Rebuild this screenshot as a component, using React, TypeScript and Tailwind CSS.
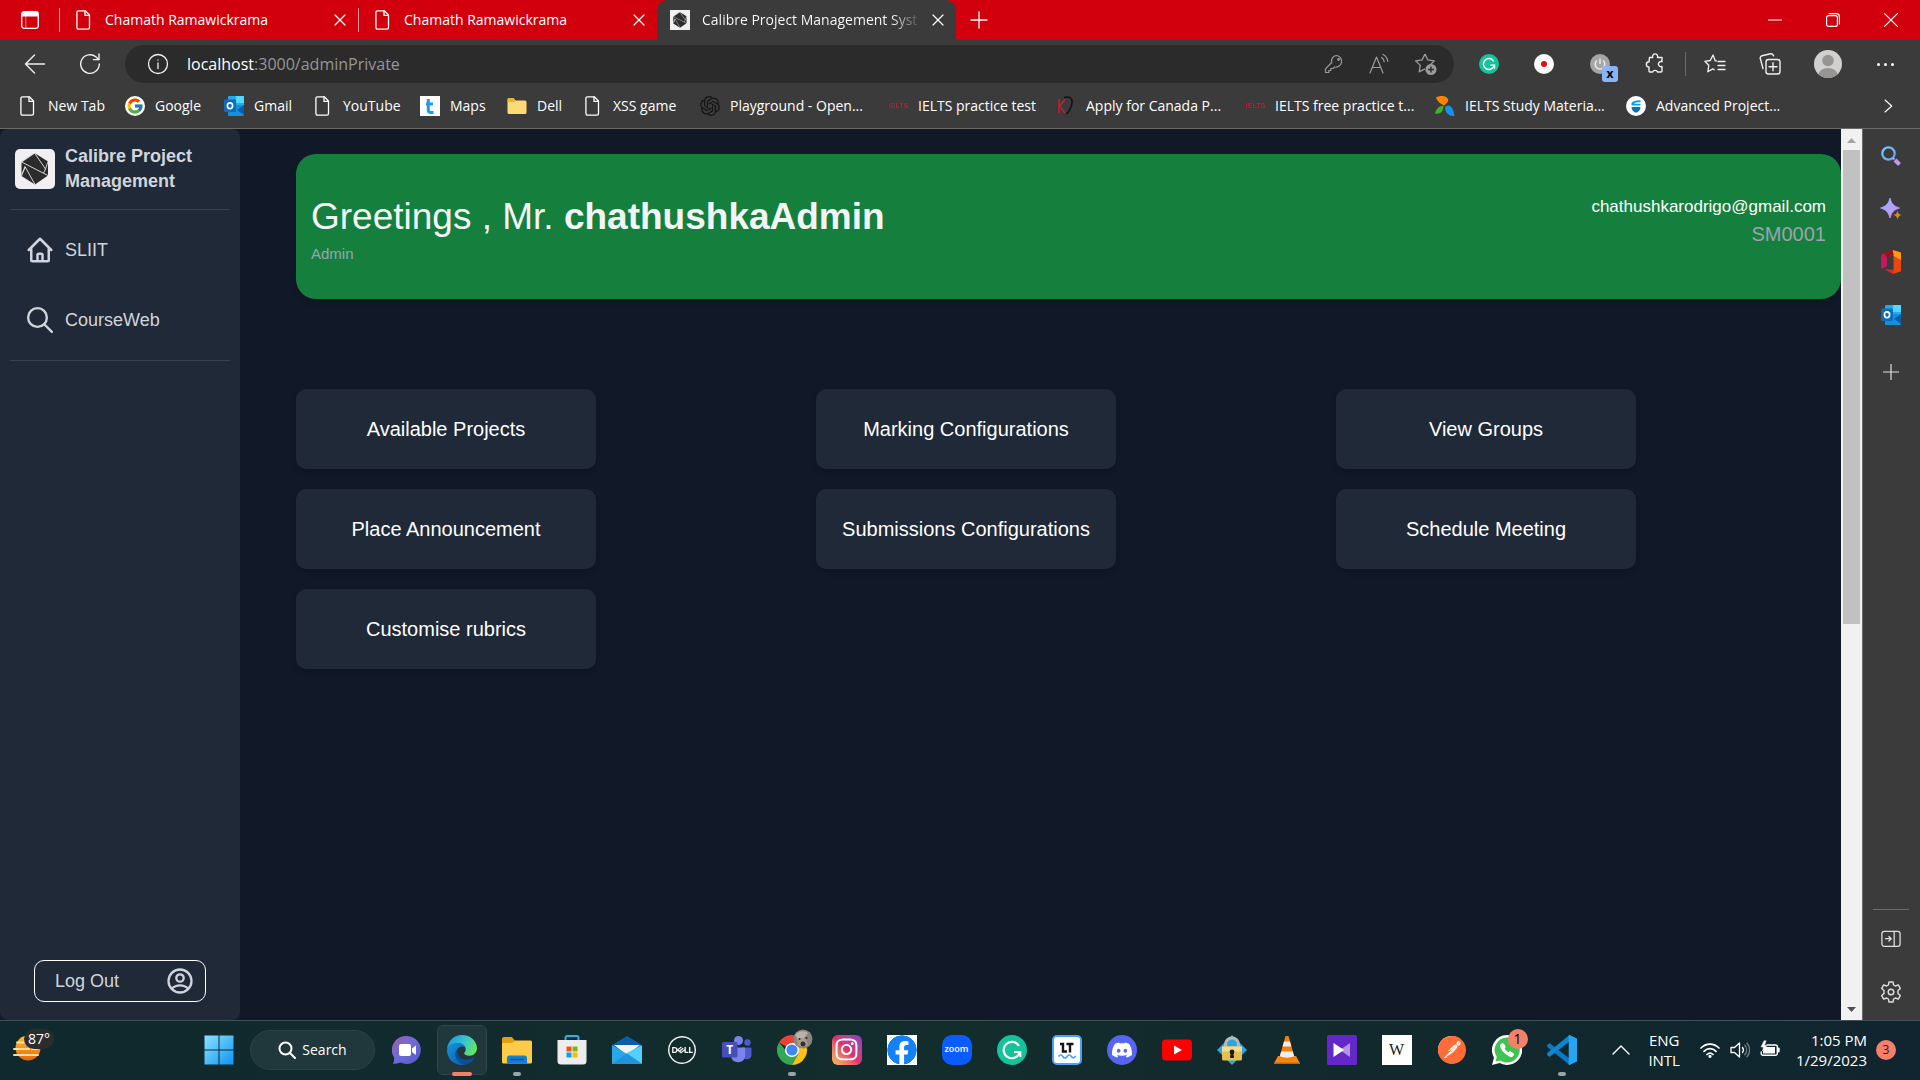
import React from "react";
import { FcGoogle } from "react-icons/fc";
import { SiDell, SiDiscord, SiPostman, SiOpenai } from "react-icons/si";
import { FaFacebookF, FaInstagram } from "react-icons/fa";
import { IoCall } from "react-icons/io5";

/* ---------- shared line icons ---------- */

type IconProps = { className?: string };

const Line = ({ className, box = 20, w = 1, children }: { className?: string; box?: number; w?: number; children: React.ReactNode }) => (
  <svg viewBox={`0 0 ${box} ${box}`} className={className} fill="none" stroke="currentColor" strokeWidth={w} strokeLinecap="round" strokeLinejoin="round" aria-hidden="true">
    {children}
  </svg>
);

const PageIcon = ({ className = "size-5" }: IconProps) => (
  <Line className={className} w={1.3}>
    <path d="M4.500 .8h6.800l4.200 4.200v12.600a1.600 1.600 0 0 1-1.600 1.600H4.500a1.600 1.600 0 0 1-1.600-1.600V2.400A1.600 1.600 0 0 1 4.500.8z" />
    <path d="M11 1v4.400h4.400" />
  </Line>
);

const CloseIcon = ({ className = "size-3" }: IconProps) => (
  <Line className={className} box={12} w={1.2}>
    <path d="M1 1l10 10M11 1L1 11" />
  </Line>
);

const CalibreLogo = ({ className }: IconProps) => (
  <svg viewBox="0 0 40 40" className={className} aria-hidden="true">
    <rect width="40" height="40" fill="#f1eff1" />
    <path d="M19.500 4L33 12.500V26.500L20 35.500L6.500 27V13z" fill="#2b2b2b" />
    <path d="M6.500 13L33 26.500M19.500 4L30.500 20L33 12.500M30.500 20L28.500 24M20 35.500L10 17.500L6.500 27M6.500 13L20 4M10.500 18L7 25" stroke="#e8e6e8" strokeWidth="0.900" fill="none" />
  </svg>
);

const OutlookIcon = ({ className = "size-5" }: IconProps) => (
  <svg viewBox="0 0 20 20" className={className} aria-hidden="true">
    <rect x="4" y="0" width="16" height="12" rx="1" fill="#28a8ea" />
    <path d="M12 0h7a1 1 0 0 1 1 1v6h-8z" fill="#50d9ff" />
    <path d="M4 9h16v10a1 1 0 0 1-1 1H5a1 1 0 0 1-1-1z" fill="#1490df" />
    <path d="M20 9v10l-7-5z" fill="#0a5ea8" />
    <rect x="0" y="3.500" width="12" height="12.500" rx="1.200" fill="#0f6cbd" />
    <ellipse cx="6" cy="9.800" rx="2.600" ry="2.900" fill="none" stroke="#fff" strokeWidth="1.600" />
  </svg>
);

const GrammarlyIcon = ({ className }: IconProps) => (
  <svg viewBox="0 0 30 30" className={className} fill="none" aria-hidden="true">
    <circle cx="15" cy="15" r="15" fill="#15c39a" />
    <path d="M22 11a8.200 8.200 0 1 0 .8 6H17" stroke="#fff" strokeWidth="2.200" />
    <path d="M23.300 16v6" stroke="#fff" strokeWidth="2" />
  </svg>
);

/* ---------- browser tab strip ---------- */

function BackgroundTab({ title }: { title: string }) {
  return (
    <div className="flex h-6 w-[299px] items-center border-l border-[#ff9a9a] pr-2.5 pl-3.5">
      <PageIcon />
      <button className="ml-[11px] flex-1 text-left text-sm leading-6">{title}</button>
      <button aria-label={`Close ${title}`} className="p-0.5">
        <CloseIcon />
      </button>
    </div>
  );
}

function TabStrip() {
  return (
    <header className="flex h-10 shrink-0 items-center bg-[#d1000c] text-white">
      <button aria-label="Tab actions menu" className="flex w-[59px] justify-center">
        <svg viewBox="0 0 20 20" className="size-5" fill="none" aria-hidden="true">
          <rect x="1.700" y="1.700" width="16.600" height="16.600" rx="2.500" stroke="#fff" strokeWidth="1.300" />
          <path d="M1.700 6.500V4a2.500 2.500 0 0 1 2.500-2.500h11.600A2.500 2.500 0 0 1 18.300 4v2.500z" fill="#fff" />
          <path d="M5.800 6v12" stroke="#fff" strokeOpacity=".5" />
        </svg>
      </button>
      <BackgroundTab title="Chamath Ramawickrama" />
      <BackgroundTab title="Chamath Ramawickrama" />
      <div className="flex h-10 w-[299px] items-center rounded-t-[10px] bg-[#3b3b3b] pr-2 pl-[13px]">
        <CalibreLogo className="size-5" />
        <button className="ml-3 bg-linear-to-r from-white from-88% to-[#5a5a5a] bg-clip-text text-left text-sm whitespace-nowrap text-transparent">
          Calibre Project Management Syst
        </button>
        <button aria-label="Close Calibre Project Management System" className="ml-auto p-1">
          <CloseIcon />
        </button>
      </div>
      <button aria-label="New tab" className="ml-3.5">
        <Line className="size-[18px]" box={18} w={1.3}>
          <path d="M9 1v16M1 9h16" />
        </Line>
      </button>
      <div className="ml-auto flex h-full">
        <button aria-label="Minimize" className="flex w-[58px] items-center justify-center">
          <Line className="size-3.5" box={14} w={1.2}>
            <path d="M.5 7h13" />
          </Line>
        </button>
        <button aria-label="Restore" className="flex w-[58px] items-center justify-center">
          <Line className="size-3.5" box={14} w={1.2}>
            <rect x=".6" y="2.600" width="10.800" height="10.800" rx="2" />
            <path d="M3 .6h7.500a2.900 2.900 0 0 1 2.900 2.900V11" />
          </Line>
        </button>
        <button aria-label="Close window" className="flex w-[58px] items-center justify-center">
          <Line className="size-3.5" box={14} w={1.2}>
            <path d="M.6.6l12.800 12.800M13.400.6L.6 13.400" />
          </Line>
        </button>
      </div>
    </header>
  );
}

/* ---------- address bar ---------- */

function Toolbar() {
  return (
    <div className="flex h-12 shrink-0 items-center bg-[#3b3b3b] text-[#f0f0f0]">
      <button aria-label="Back" className="ml-6">
        <Line className="size-[22px]" box={22} w={1.4}>
          <path d="M20.500 11H1.500M10.500 2L1.500 11l9 9" />
        </Line>
      </button>
      <button aria-label="Refresh" className="ml-[33px]">
        <Line className="size-[22px]" box={22} w={1.4}>
          <path d="M20.300 11a9.300 9.300 0 1 1-3.200-7l2.500 2.400" />
          <path d="M20 1v5.600h-5.600" />
        </Line>
      </button>
      <div className="ml-6 flex h-[38px] flex-1 items-center rounded-full bg-[#2b2b2b] pr-4 pl-5">
        <button aria-label="View site information" className="ml-0.5">
          <Line className="size-[22px]" box={22} w={1.3}>
            <circle cx="11" cy="11" r="9.500" />
            <path d="M11 10v5.500M11 6.800v.3" />
          </Line>
        </button>
        <div className="relative ml-[18px] h-6 flex-1 text-base leading-6">
          <div aria-hidden="true" className="whitespace-nowrap text-[#969696]">
            <span className="text-white">localhost</span>:3000/adminPrivate
          </div>
          <input aria-label="Address and search bar" defaultValue="" className="absolute inset-0 w-full bg-transparent outline-none" />
        </div>
        <div className="flex items-center gap-6 text-[#9b9b9b]">
          <button aria-label="Saved passwords">
            <Line className="size-5" w={1.2}>
              <path d="M13 1.500a5.500 5.500 0 0 0-5.300 7L1.500 14.800v3.700h3.300v-2h2v-2h2.300l1.200-1.400A5.500 5.500 0 1 0 13 1.500z" />
              <circle cx="14.500" cy="5.500" r=".8" />
            </Line>
          </button>
          <button aria-label="Read aloud">
            <Line className="size-[22px]" box={22} w={1.2}>
              <path d="M2 20L8.500 4 15 20M4.300 14.500h8.400M13.500 4.500c1.500.8 2.500 2.400 2.700 4.200M15 1.500c2.700 1.300 4.400 3.800 4.800 7" />
            </Line>
          </button>
          <button aria-label="Add this page to favorites">
            <svg viewBox="0 0 24 24" className="size-6" fill="none" aria-hidden="true">
              <path d="M11 2l2.900 5.900 6.500.9-4.700 4.600.3 1.500M11 2L8.100 7.900l-6.500.9 4.700 4.600-1.100 6.500 5.800-3" stroke="currentColor" strokeWidth="1.300" strokeLinejoin="round" />
              <circle cx="17" cy="17.500" r="5.500" fill="currentColor" />
              <path d="M17 14.500v6M14 17.500h6" stroke="#2b2b2b" strokeWidth="1.400" />
            </svg>
          </button>
        </div>
      </div>
      <button aria-label="Grammarly" className="ml-[25px]">
        <GrammarlyIcon className="size-5" />
      </button>
      <button aria-label="Recorder" className="ml-[35px] flex size-5 items-center justify-center rounded-full bg-white">
        <span className="size-1.5 rounded-full bg-[#e01010]" />
      </button>
      <button aria-label="Power extension" className="relative ml-9">
        <svg viewBox="0 0 20 20" className="size-5" fill="none" aria-hidden="true">
          <circle cx="10" cy="10" r="10" fill="#a6a6a6" />
          <path d="M7 6.500a4.800 4.800 0 1 0 6 0M10 4.500V10" stroke="#e8e8e8" strokeWidth="1.600" />
        </svg>
        <span className="absolute top-3 left-3 flex h-4 w-4 items-center justify-center rounded-[3px] bg-[#8ab4f8] text-xs leading-4 font-bold text-black">x</span>
      </button>
      <button aria-label="Extensions" className="ml-[34px]">
        <Line className="size-[22px]" box={22} w={1.400}>
          <path d="M5.500 4.500h3.200a2.600 2.600 0 1 1 4.800 0H18v4.200a2.600 2.600 0 1 0 0 4.800V18a1 1 0 0 1-1 1h-3.500a2.600 2.600 0 0 0-4.800 0H6a1 1 0 0 1-1-1v-4a2.600 2.600 0 1 1 0-5.200z" />
        </Line>
      </button>
      <span className="ml-[19px] h-6 w-px bg-[#6b6b6b]" />
      <button aria-label="Favorites" className="ml-[18px]">
        <Line className="size-[22px]" box={22} w={1.300}>
          <path d="M12.500 7.800h-1.300L9 2 6.300 7.500l-5.500.8 4 4-1 6.500 5-2.900 1.500.8M14 8.500h7M14 12.500h7M14 16.500h7" />
        </Line>
      </button>
      <button aria-label="Collections" className="ml-[33px]">
        <Line className="size-[22px]" box={22} w={1.400}>
          <path d="M4 15.500L1.300 5.500A2.300 2.300 0 0 1 3 2.700L11.500.8c1.500-.3 2.600.5 3 2" />
          <rect x="7" y="6.500" width="14" height="14.500" rx="2.500" />
          <path d="M14 9.700v8M10 13.700h8" />
        </Line>
      </button>
      <button aria-label="Profile" className="ml-[33px]">
        <svg viewBox="0 0 28 28" className="size-7" aria-hidden="true">
          <clipPath id="avatar"><circle cx="14" cy="14" r="14" /></clipPath>
          <g clipPath="url(#avatar)">
            <rect width="28" height="28" fill="#d2d0ce" />
            <circle cx="14" cy="10.500" r="5.800" fill="#979593" />
            <ellipse cx="14" cy="24.500" rx="9.500" ry="6.500" fill="#979593" />
          </g>
        </svg>
      </button>
      <button aria-label="Settings and more" className="mr-[25px] ml-[34px] flex gap-1 px-px">
        <span className="size-[3px] rounded-full bg-white" />
        <span className="size-[3px] rounded-full bg-white" />
        <span className="size-[3px] rounded-full bg-white" />
      </button>
    </div>
  );
}

/* ---------- bookmarks ---------- */

const IeltsMark = () => <span className="font-['Liberation_Sans'] text-[7px] font-bold text-[#c8102e]">IELTS</span>;

const bookmarks: { label: string; width: string; icon: React.ReactNode }[] = [
  { label: "New Tab", width: "w-[107px]", icon: <PageIcon /> },
  { label: "Google", width: "w-[99px]", icon: <span className="flex size-5 items-center justify-center rounded-full bg-white"><FcGoogle className="size-[18px]" /></span> },
  { label: "Gmail", width: "w-[89px]", icon: <OutlookIcon /> },
  { label: "YouTube", width: "w-[107px]", icon: <PageIcon /> },
  {
    label: "Maps",
    width: "w-[87px]",
    icon: (
      <svg viewBox="0 0 20 20" className="size-5" aria-hidden="true">
        <rect width="20" height="20" fill="#fff" />
        <path d="M8.300 3v11a2.500 2.500 0 0 0 2.500 2.500h2.700M6 8h7" stroke="#1d9bf0" strokeWidth="3" fill="none" />
      </svg>
    ),
  },
  {
    label: "Dell",
    width: "w-[76px]",
    icon: (
      <svg viewBox="0 0 20 20" className="size-5" aria-hidden="true">
        <path d="M.5 3.500a1.500 1.500 0 0 1 1.500-1.500h4.500l2 2.500H18a1.500 1.500 0 0 1 1.500 1.500v10.500a1.500 1.500 0 0 1-1.500 1.500H2a1.500 1.500 0 0 1-1.500-1.500z" fill="#ffd977" />
        <path d="M.5 6V3.500A1.500 1.500 0 0 1 2 2h4.500l2 2.500L7 6z" fill="#e8b32e" />
      </svg>
    ),
  },
  { label: "XSS game", width: "w-[117px]", icon: <PageIcon /> },
  { label: "Playground - Open...", width: "w-[188px]", icon: <SiOpenai className="size-5 text-[#151515]" /> },
  { label: "IELTS practice test", width: "w-[168px]", icon: <IeltsMark /> },
  {
    label: "Apply for Canada P...",
    width: "w-[189px]",
    icon: (
      <svg viewBox="0 0 20 20" className="size-5" fill="none" aria-hidden="true">
        <path d="M3 3v14M9.500 3L3.500 10l5.500 7" stroke="#c41f30" strokeWidth="1.500" />
        <path d="M8 1.500c6-1 8.500.5 8 5-.4 4-2.500 8.500-5.500 11.500" stroke="#161616" strokeWidth="1.800" />
      </svg>
    ),
  },
  { label: "IELTS free practice t...", width: "w-[190px]", icon: <IeltsMark /> },
  {
    label: "IELTS Study Materia...",
    width: "w-[191px]",
    icon: (
      <svg viewBox="0 0 20 20" className="size-5" aria-hidden="true">
        <path d="M1 1.500C5-1 11-.5 13 3c1 2-1 4.500-4 6.500C5.500 8 2 5 1 1.500z" fill="#ff8200" />
        <path d="M8.500 10C5 9 1 13 0 17.500c4 1 8.500-1 8.500-7.500z" fill="#43b02a" />
        <path d="M10 11c4-3.500 8-1 9.500 9-4.500.5-9.500-2-9.500-9z" fill="#1590e8" />
      </svg>
    ),
  },
  {
    label: "Advanced Project...",
    width: "w-[170px]",
    icon: (
      <svg viewBox="0 0 20 20" className="size-5" aria-hidden="true">
        <circle cx="10" cy="10" r="10" fill="#fff" />
        <path d="M5.500 9.500V7c1.500-2 4.500-3 9-2.800v2c-3.500 0-5.500.3-6.500 1.500h6.500v1.800z" fill="#0aa0dc" />
        <path d="M5.500 11h9c0 3-2 5-4.500 5.800C7.500 16 5.500 14 5.500 11z" fill="#0b72b5" />
      </svg>
    ),
  },
];

function BookmarksBar() {
  return (
    <nav aria-label="Favorites bar" className="flex h-10 shrink-0 items-center bg-[#3b3b3b] pb-1 pl-[18px] text-sm text-white">
      {bookmarks.map((b) => (
        <a key={b.label} href="#" className={`flex shrink-0 items-center gap-2.5 whitespace-nowrap ${b.width}`}>
          <span className="flex size-5 shrink-0 items-center justify-center">{b.icon}</span>
          {b.label}
        </a>
      ))}
      <button aria-label="Show more favorites" className="mr-[26px] ml-auto">
        <Line className="h-[18px] w-3" box={16} w={1.500}>
          <path d="M4 0l9 8-9 8" />
        </Line>
      </button>
    </nav>
  );
}

/* ---------- the web page ---------- */

function AppSidebar() {
  return (
    <aside className="flex w-60 shrink-0 flex-col rounded-lg bg-[#1f2937] px-2.5 text-lg text-[#d1d5db]">
      <div className="flex h-[81px] items-center gap-2.5 border-b border-[#374151] pl-[5px]">
        <CalibreLogo className="size-10 shrink-0 rounded-[5px]" />
        <h2 className="leading-[25px] font-bold">
          Calibre Project
          <br />
          Management
        </h2>
      </div>
      <nav aria-label="Main" className="flex flex-col gap-5 border-b border-[#374151] py-[15px]">
        <a href="#" className="flex h-[50px] items-center gap-2.5 pl-[15px]">
          <Line className="size-[30px]" box={24} w={2}>
            <path d="M3 12l2-2m0 0l7-7 7 7M5 10v10a1 1 0 0 0 1 1h3m10-11l2 2m-2-2v10a1 1 0 0 1-1 1h-3m-6 0a1 1 0 0 0 1-1v-4a1 1 0 0 1 1-1h2a1 1 0 0 1 1 1v4a1 1 0 0 0 1 1m-6 0h6" />
          </Line>
          SLIIT
        </a>
        <a href="#" className="flex h-[50px] items-center gap-2.5 pl-[15px]">
          <Line className="size-[30px]" box={24} w={1.900}>
            <circle cx="10" cy="10" r="7.500" />
            <path d="M15.600 15.600L21.500 21.500" />
          </Line>
          CourseWeb
        </a>
      </nav>
      <button className="mx-6 mt-auto mb-[18px] flex h-[42px] items-center justify-between rounded-[10px] border border-white pr-3 pl-5">
        Log Out
        <Line className="size-[26px]" box={26} w={2.300}>
          <circle cx="13" cy="13" r="11.500" />
          <circle cx="13" cy="10" r="3.700" />
          <path d="M5 20.500c4-4.300 12-4.300 16 0" />
        </Line>
      </button>
    </aside>
  );
}

const actions = [
  "Available Projects",
  "Marking Configurations",
  "View Groups",
  "Place Announcement",
  "Submissions Configurations",
  "Schedule Meeting",
  "Customise rubrics",
];

function Dashboard() {
  return (
    <main className="flex-1 pt-[25px] pl-14">
      <section className="flex h-[145px] justify-between rounded-[20px] bg-[#15803d] px-[15px] pt-10 shadow-md">
        <div>
          <h1 className="text-[37px] leading-[45px] text-[#f3f4f6]">
            Greetings , Mr. <strong>chathushkaAdmin</strong>
          </h1>
          <p className="mt-[5px] text-[15px] leading-5 text-[#9ca3af]">Admin</p>
        </div>
        <div className="pt-px text-right">
          <p className="text-[17px] leading-6 text-white">chathushkarodrigo@gmail.com</p>
          <p className="text-xl leading-[30px] text-[#9ca3af]">SM0001</p>
        </div>
      </section>
      <div className="mt-[90px] grid grid-cols-3 gap-x-[15px] gap-y-5">
        {actions.map((label) => (
          <button key={label} className="h-20 w-[300px] rounded-[10px] bg-[#1f2937] text-xl text-white shadow-md">
            {label}
          </button>
        ))}
      </div>
    </main>
  );
}

function PageScrollbar() {
  return (
    <div aria-hidden="true" className="flex w-[21px] shrink-0 flex-col items-center bg-[#f1f1f1]">
      <svg viewBox="0 0 21 21" className="size-[21px] shrink-0">
        <path d="M6 14l4.500-5 4.500 5z" fill="#a3a3a3" />
      </svg>
      <div className="w-[17px] grow-[474] bg-[#c1c1c1]" />
      <div className="grow-[375]" />
      <svg viewBox="0 0 21 21" className="size-[21px] shrink-0">
        <path d="M6 8l4.500 5 4.500-5z" fill="#505050" />
      </svg>
    </div>
  );
}

/* ---------- browser side panel ---------- */

function EdgeSidebar() {
  const slot = "flex h-[53px] w-full items-center justify-center";
  return (
    <aside aria-label="Browser sidebar" className="flex w-[58px] shrink-0 flex-col items-center border-l border-[#6b6b6b] bg-[#3b3b3b] pr-0.5 text-[#e0e0e0]">
      <button aria-label="Search" className={slot}>
        <svg viewBox="0 0 20 20" className="size-5" fill="none" aria-hidden="true">
          <defs>
            <linearGradient id="lens" x1="0" y1="0" x2="1" y2="1">
              <stop stopColor="#6fd0fb" />
              <stop offset="1" stopColor="#6f9df5" />
            </linearGradient>
          </defs>
          <circle cx="7.500" cy="7.500" r="6.200" stroke="url(#lens)" strokeWidth="2.200" />
          <path d="M12 12l1.500 1.500" stroke="#8ab4f8" strokeWidth="2" />
          <path d="M14 14l4.500 4.500" stroke="#c295f0" strokeWidth="4" />
        </svg>
      </button>
      <button aria-label="Discover" className={slot}>
        <svg viewBox="0 0 22 22" className="size-[22px]" aria-hidden="true">
          <defs>
            <linearGradient id="spark" x1="0" y1="0" x2="1" y2="1">
              <stop stopColor="#8fb8ff" />
              <stop offset="1" stopColor="#d48cf5" />
            </linearGradient>
          </defs>
          <path d="M10 0c1.700 6 3.500 8 9.500 10-6 2-7.800 4-9.500 10-1.700-6-3.500-8-9.500-10C6.500 8 8.300 6 10 0z" fill="url(#spark)" stroke="url(#spark)" strokeWidth=".8" strokeLinejoin="round" />
          <path d="M17.500 12.500c.6 3 1.500 4 4.500 4.600-3 .6-3.900 1.600-4.500 4.600-.6-3-1.500-4-4.500-4.600 3-.6 3.900-1.600 4.500-4.600z" fill="#c9940f" />
        </svg>
      </button>
      <button aria-label="Office" className={slot}>
        <svg viewBox="0 0 20 24" className="h-6 w-5" aria-hidden="true">
          <path d="M11.500 0L19 2.200a1.500 1.500 0 0 1 1 1.500v16.600a1.500 1.500 0 0 1-1 1.500L11.500 24l1-5V4z" fill="#e8480c" />
          <path d="M11.500 0L19 2.200a1.500 1.500 0 0 1 1 1.500V10l-7.500-4z" fill="#ff9a0a" />
          <path d="M11.500 0l1 5L6 7.500V16L1.500 18.500 0 17V6.500A3 3 0 0 1 1.800 4z" fill="#c3195d" />
          <path d="M11.500 0l1 5L6 7.500 3 3.500z" fill="#9c1218" />
          <path d="M4 19.500h8.500V24h-1z" fill="#e0232f" />
        </svg>
      </button>
      <button aria-label="Outlook" className={slot}>
        <OutlookIcon />
      </button>
      <button aria-label="Customize sidebar" className={slot + " mt-1"}>
        <Line className="size-4" box={16} w={1.200}>
          <path d="M8 .5v15M.5 8h15" />
        </Line>
      </button>
      <div className="mt-auto flex w-full flex-col items-center pb-0.5">
        <hr className="w-9 border-[#6b6b6b]" />
        <button aria-label="Hide sidebar" className={slot + " mt-0.5"}>
          <Line className="h-5 w-[22px]" box={22} w={1.400}>
            <rect x="1" y="2.500" width="20" height="16.500" rx="2.500" />
            <path d="M14.500 2.500V19M5 10.700h6M8.700 8.200l2.500 2.500-2.500 2.500" />
          </Line>
        </button>
        <button aria-label="Settings" className={slot}>
          <Line className="size-[22px]" box={22} w={1.400}>
            <path d="M9 1h4l.6 3 1.800 1 2.900-1.100 2 3.500L18 9.500v3l2.300 2.100-2 3.500-2.900-1.100-1.800 1L13 21H9l-.6-3-1.800-1-2.900 1.100-2-3.500L4 12.500v-3L1.700 7.400l2-3.500L6.600 5l1.800-1z" />
            <circle cx="11" cy="11" r="2.800" />
          </Line>
        </button>
      </div>
    </aside>
  );
}

/* ---------- taskbar ---------- */

const Art = ({ children }: { children: React.ReactNode }) => (
  <svg viewBox="0 0 30 30" className="size-[30px]" aria-hidden="true">
    {children}
  </svg>
);

const taskIcons: { name: string; art: React.ReactNode; state?: "open" | "active" }[] = [
  {
    name: "Chat",
    art: (
      <Art>
        <defs>
          <linearGradient id="chat" x1="0" y1="0" x2="1" y2="1">
            <stop stopColor="#9b5fae" />
            <stop offset=".5" stopColor="#6d6bd6" />
            <stop offset="1" stopColor="#5059c9" />
          </linearGradient>
        </defs>
        <path d="M15 1a14 14 0 1 1-6.500 26.500C6 28.500 3.500 29 1 28.800c1-2 1.500-4 1-6.500A14 14 0 0 1 15 1z" fill="url(#chat)" />
        <rect x="7" y="9" width="12" height="12" rx="2" fill="#fff" />
        <path d="M20 13.500l4-3v9.500l-4-3z" fill="#fff" />
      </Art>
    ),
  },
  {
    name: "Microsoft Edge",
    state: "active",
    art: (
      <Art>
        <defs>
          <linearGradient id="edgeTop" x1="0" y1=".3" x2="1" y2=".7">
            <stop stopColor="#1a9be0" />
            <stop offset=".5" stopColor="#36c5d0" />
            <stop offset="1" stopColor="#66eb52" />
          </linearGradient>
          <linearGradient id="edgeLow" x1="0" y1="0" x2="1" y2="1">
            <stop stopColor="#1595e0" />
            <stop offset="1" stopColor="#0c59a4" />
          </linearGradient>
        </defs>
        <path d="M0 14C.8 6 7 0 15 0c8.500 0 15 6.300 15 13 0 4.500-3.300 7.700-7.600 7.700-3 0-5.200-1-5.200-2.400 0-.9 1.500-1.600 1.500-4C18.700 11 15.500 8.300 11 8.300 6 8.300 2 10.500 0 14z" fill="url(#edgeTop)" />
        <path d="M0 15C.8 10.500 5 8 10.500 8c4 0 7 1.800 8 4.500-1-.8-2.200-1-3.500-1-3.500 0-5.500 3-5.500 6.500 0 5 4 11 10 11-1.500.7-3 1-4.500 1C6.500 30 0 23.500 0 15z" fill="url(#edgeLow)" />
        <path d="M11.500 13.500C9 19 12.500 24.800 19 24.800c3.500 0 6-1 8-2.200.5-.3 1 .2.700.7C25.500 27 21.500 29.500 17.500 29.500 11 28.500 7.500 22.500 8.300 18c.4-2.200 1.500-3.700 3.200-4.500z" fill="#0b4f9c" />
      </Art>
    ),
  },
  {
    name: "File Explorer",
    state: "open",
    art: (
      <Art>
        <path d="M0 4a2 2 0 0 1 2-2h8l3 4-3 4H0z" fill="#e0a010" />
        <path d="M0 8h10l3-2.500h15.500A1.500 1.500 0 0 1 30 7v20a1.500 1.500 0 0 1-1.500 1.500h-27A1.500 1.500 0 0 1 0 27z" fill="#fdcb45" />
        <path d="M5 28.500V23a2.500 2.500 0 0 1 2.500-2.500h15A2.500 2.500 0 0 1 25 23v5.500z" fill="#1380d6" />
        <path d="M8.500 24.500h13" stroke="#0a4c8c" strokeWidth="1.500" />
      </Art>
    ),
  },
  {
    name: "Microsoft Store",
    art: (
      <Art>
        <path d="M8.500 7V2.800A1.800 1.800 0 0 1 10.300 1h9.400a1.800 1.800 0 0 1 1.800 1.800V7" stroke="#29b5ea" strokeWidth="2" fill="none" />
        <path d="M.5 5h29v21a3.500 3.500 0 0 1-3.500 3.500H4A3.500 3.500 0 0 1 .5 26z" fill="#ededed" />
        <path d="M9.500 11.500h5v5h-5z" fill="#f25022" />
        <path d="M15.500 11.500h5v5h-5z" fill="#7fba00" />
        <path d="M9.500 17.500h5v5h-5z" fill="#00a4ef" />
        <path d="M15.500 17.500h5v5h-5z" fill="#ffb900" />
      </Art>
    ),
  },
  {
    name: "Mail",
    art: (
      <Art>
        <path d="M0 10L15 1l15 9-15 10z" fill="#0c5cab" />
        <path d="M2 10h26L15 20z" fill="#f2f2f2" />
        <path d="M0 10l15 9L30 29H0z" fill="#28a8e8" />
        <path d="M30 10v19L14 18.500z" fill="#50d0fa" />
        <path d="M0 29l15-10.500L30 29z" fill="#1f93dc" />
      </Art>
    ),
  },
  { name: "Dell", art: <SiDell className="size-7 text-[#f2f2f2]" /> },
  {
    name: "Microsoft Teams",
    art: (
      <Art>
        <circle cx="25.500" cy="7.500" r="3.200" fill="#5059c9" />
        <path d="M20 12.500h8.500a1 1 0 0 1 1 1V20a4.700 4.700 0 0 1-9 1.500z" fill="#5059c9" />
        <circle cx="16.500" cy="5.500" r="4.500" fill="#7b83eb" />
        <path d="M9 12.500h13a1.200 1.200 0 0 1 1.200 1.200V21a7.300 7.300 0 0 1-14.200 1z" fill="#7b83eb" />
        <rect x="0" y="7" width="15.500" height="15.500" rx="1.500" fill="#464eb8" />
        <text x="7.700" y="19" textAnchor="middle" fontSize="12" fontWeight="700" fill="#fff" fontFamily="Open Sans, sans-serif">T</text>
      </Art>
    ),
  },
  {
    name: "Google Chrome",
    state: "open",
    art: (
      <svg viewBox="0 0 36 36" className="-mt-1.5 -mr-1.5 size-9" aria-hidden="true">
        <path d="M15 21L2 13.500A15 15 0 0 1 28 13.500H15z" fill="#ea4335" />
        <path d="M15 21h-6.500L2 13.500A15 15 0 0 0 15 36l6.500-11.200z" fill="#34a853" />
        <path d="M15 21l6.500 3.800L15 36a15 15 0 0 0 13-22.500H15z" fill="#fbc116" />
        <circle cx="15" cy="21" r="7" fill="#fff" />
        <circle cx="15" cy="21" r="5.600" fill="#4285f4" />
        <circle cx="26" cy="10" r="9.500" fill="#8c847d" />
        <path d="M18 6c3-4 9-5 13-2l-4 5-6 2z" fill="#b9b1aa" />
        <path d="M20 12c2-3 6-4 9-2l2 5c-3 4-8 4-10 1z" fill="#a69d95" />
        <circle cx="26" cy="15" r="2.500" fill="#35302d" />
        <circle cx="22.500" cy="10" r="1" fill="#2c2826" />
        <circle cx="29.500" cy="9" r="1" fill="#2c2826" />
      </svg>
    ),
  },
  {
    name: "Instagram",
    art: (
      <span className="flex size-[30px] items-center justify-center rounded-md bg-linear-to-tr from-[#fdc04b] via-[#e1306c] to-[#7a3bc8]">
        <FaInstagram className="size-[25px] text-white" />
      </span>
    ),
  },
  {
    name: "Facebook",
    art: (
      <span className="flex size-[30px] items-end justify-center bg-[radial-gradient(circle,#1282f5_68%,#fff_70%)]">
        <FaFacebookF className="size-6 text-white" />
      </span>
    ),
  },
  {
    name: "Zoom",
    art: <span className="flex size-[30px] items-center justify-center rounded-[10px] bg-[#0b5cff] pb-0.5 text-[9px] font-semibold text-white">zoom</span>,
  },
  { name: "Grammarly", art: <GrammarlyIcon className="size-[30px]" /> },
  {
    name: "LanguageTool",
    art: (
      <Art>
        <rect x="1" y="1" width="28" height="28" rx="4" fill="#fff" stroke="#4aa3f5" strokeWidth="2" />
        <path d="M8 9h3v7.500h4M14.500 9h7M18 9v8.500" stroke="#151515" strokeWidth="2.400" fill="none" />
        <path d="M6.500 21.500c1.500-2 3-2 4.300 0s2.900 2 4.300 0 2.900-2 4.300 0 2.900 1.500 4.300-.5" stroke="#4aa3f5" strokeWidth="1.700" fill="none" />
      </Art>
    ),
  },
  {
    name: "Discord",
    art: (
      <span className="flex size-[30px] items-center justify-center rounded-full bg-[#5865f2]">
        <SiDiscord className="size-5 text-white" />
      </span>
    ),
  },
  {
    name: "YouTube",
    art: (
      <Art>
        <rect x="0" y="4.500" width="30" height="21" rx="4" fill="#f00" />
        <path d="M12 10.500l8 4.500-8 4.500z" fill="#fff" />
      </Art>
    ),
  },
  {
    name: "Password Vault",
    art: (
      <Art>
        <path d="M15 0l15 15-15 15L0 15z" fill="#2fa4e0" />
        <path d="M8.500 13V9.500a6.500 6.500 0 0 1 13 0V13" stroke="#b9b9b9" strokeWidth="3" fill="none" />
        <rect x="5" y="11.500" width="20" height="14" rx="1.500" fill="#e3c04f" />
        <path d="M5 11.500h20v5H5z" fill="#f3dd8a" />
        <circle cx="15" cy="17" r="2.400" fill="#1b1b1b" />
        <path d="M13.800 17h2.400l.8 6h-4z" fill="#1b1b1b" />
      </Art>
    ),
  },
  {
    name: "VLC",
    art: (
      <Art>
        <path d="M6 21h18l4 7.500H2z" fill="#f48b0a" />
        <path d="M13.500 1h3L23 24c-3 2.500-13 2.500-16 0z" fill="#f57f0a" />
        <path d="M12 6.500h6l1.400 5h-8.800zM9.200 16.500h11.600l1.400 4.800c-4 1.800-10.400 1.800-14.400 0z" fill="#eeeeee" />
        <path d="M2 27.500h26V29H2z" fill="#c96500" />
      </Art>
    ),
  },
  {
    name: "Visual Studio",
    art: (
      <Art>
        <rect width="30" height="30" rx="1.500" fill="#6427c8" />
        <path d="M23 8v14l-10-7z" fill="#b893ea" />
        <path d="M6.500 8L17 15 6.500 22z" fill="#fff" />
      </Art>
    ),
  },
  {
    name: "Wikipedia",
    art: <span className="flex size-[30px] items-center justify-center bg-white font-['Liberation_Serif'] text-base text-[#222]">W</span>,
  },
  {
    name: "Postman",
    art: (
      <span className="flex size-[27px] items-center justify-center rounded-full bg-white">
        <SiPostman className="size-7 shrink-0 text-[#ff6c37]" />
      </span>
    ),
  },
  {
    name: "WhatsApp",
    art: (
      <span className="relative flex">
        <Art>
          <path d="M15 0a15 15 0 1 1-7.300 28L0 30l2-7.500A15 15 0 0 1 15 0z" fill="#fff" />
          <path d="M15 2.500A12.500 12.500 0 1 1 8.300 25.400L3.500 26.600 4.800 22A12.500 12.500 0 0 1 15 2.500z" fill="#3fc351" />
        </Art>
        <IoCall className="absolute top-[7px] left-[7px] size-4 text-white" />
        <span className="absolute -top-1.5 left-4 flex size-5 items-center justify-center rounded-full bg-[#f5806a] text-sm text-black">1</span>
      </span>
    ),
  },
  {
    name: "Visual Studio Code",
    state: "open",
    art: (
      <Art>
        <path d="M0 10.300l2.500-2.200 20 15.500V30L.3 12z" fill="#0879c4" />
        <path d="M0 19.700l2.500 2.200L22.500 6.500V0L.3 18z" fill="#0b87d2" />
        <path d="M22.500 0L30 3.500v23L22.500 30c-.6 0-.8-.3-.8-.8V.8c0-.5.200-.8.8-.8z" fill="#27a5f2" />
      </Art>
    ),
  },
];

function Taskbar() {
  return (
    <footer className="flex h-[60px] shrink-0 items-center border-t border-[#3f5150] bg-linear-to-r from-[#10292e] via-[#132c2c] to-[#10252f] pb-0.5 text-white">
      <button aria-label="Weather, 87 degrees" className="relative flex h-full w-[191px] items-center pl-[13px]">
        <svg viewBox="0 0 28 30" className="mb-1 h-[30px] w-7" aria-hidden="true">
          <defs>
            <linearGradient id="sun" x1="0" y1="0" x2="0" y2="1">
              <stop stopColor="#fdc52c" />
              <stop offset="1" stopColor="#e8650c" />
            </linearGradient>
          </defs>
          <circle cx="15" cy="15" r="12.500" fill="url(#sun)" />
          <path d="M4 9.500h9M1 16h15M19 16h5M1 22h24" stroke="#f6dca5" strokeWidth="2" strokeLinecap="round" />
        </svg>
        <span className="absolute top-2 left-6 rounded-full bg-[#2c2c2c] px-1 text-sm leading-5">87°</span>
      </button>
      <button aria-label="Start" className="flex w-[55px] justify-center">
        <svg viewBox="0 0 30 30" className="size-[30px]" aria-hidden="true">
          <defs>
            <linearGradient id="win" x1="0" y1="0" x2="30" y2="30" gradientUnits="userSpaceOnUse">
              <stop stopColor="#8fe3ff" />
              <stop offset="1" stopColor="#0a93f5" />
            </linearGradient>
          </defs>
          <path d="M.5.5h14v14H.5zM15.500.5h14v14h-14zM.5 15.500h14v14H.5zM15.500 15.500h14v14h-14z" fill="url(#win)" />
        </svg>
      </button>
      <button className="mx-1 flex h-10 w-[125px] items-center justify-center gap-1.5 rounded-full border border-[#2c4243] bg-[#20383b] text-sm">
        <Line className="size-[18px]" box={18} w={2}>
          <circle cx="7.500" cy="7.500" r="6" />
          <path d="M12 12l5 5" />
        </Line>
        Search
      </button>
      {taskIcons.map((t) => (
        <button key={t.name} aria-label={t.name} className="relative flex h-[52px] w-[55px] shrink-0 items-center justify-center">
          <span className={`flex h-[50px] w-[50px] items-center justify-center rounded-md ${t.state === "active" ? "border border-[#2f4548] bg-[#20373c]" : ""}`}>{t.art}</span>
          {t.state === "open" && <span className="absolute bottom-0 left-6 h-1 w-2 rounded-full bg-[#9aa5a5]" />}
          {t.state === "active" && <span className="absolute bottom-0 left-[18px] h-1 w-5 rounded-full bg-[#f5806a]" />}
        </button>
      ))}
      <div className="ml-auto flex items-center pr-6 text-[15px] leading-5">
        <button aria-label="Show hidden icons">
          <Line className="h-5 w-5" w={1.400}>
            <path d="M2 14l8-8 8 8" />
          </Line>
        </button>
        <button className="ml-[17px] text-center">
          ENG
          <br />
          INTL
        </button>
        <button aria-label="Network, volume and battery" className="ml-5 flex gap-2.5">
          <Line className="size-5" w={1.700}>
            <path d="M1 8c5-5.300 13-5.300 18 0M4 11.300c3.500-3.600 8.500-3.600 12 0M7 14.500c1.800-1.700 4.200-1.700 6 0" />
            <circle cx="10" cy="16.300" r=".8" fill="currentColor" />
          </Line>
          <Line className="size-5" w={1.300}>
            <path d="M1 7.500h3.500L9.500 3v14l-5-4.500H1z" />
            <path d="M12.500 7.500c1.200 1.500 1.200 3.500 0 5" />
            <path d="M14.800 5.300c2.500 2.800 2.500 6.600 0 9.400M17 3.300c3.500 4 3.500 9.400 0 13.400" strokeOpacity=".4" />
          </Line>
          <Line className="size-5" w={1.400}>
            <path d="M7 5h8.500A1.800 1.800 0 0 1 17.300 6.800v6.700a1.800 1.800 0 0 1-1.800 1.800H3A1.800 1.800 0 0 1 1.200 13.500V12" />
            <path d="M4 7h11v6.500H3V11z" fill="currentColor" stroke="none" />
            <path d="M18.700 8.500v3" strokeWidth="2" />
            <path d="M4 1L1 7h2.500L2.500 11 7 5.500H4.500L6 1z" fill="currentColor" strokeWidth=".5" />
          </Line>
        </button>
        <button className="ml-4 text-right">
          1:05 PM
          <br />
          1/29/2023
        </button>
        <button aria-label="3 new notifications" className="ml-[9px] flex size-5 items-center justify-center rounded-full bg-[#f5806a] text-xs text-[#2a1512]">
          3
        </button>
      </div>
    </footer>
  );
}

export default function App() {
  return (
    <div className="flex h-screen flex-col overflow-hidden bg-[#111827] font-['Open_Sans','Noto_Sans',sans-serif]">
      <TabStrip />
      <Toolbar />
      <BookmarksBar />
      <div className="flex min-h-0 flex-1 border-t border-[#6b6b6b]">
        <div className="flex min-w-0 flex-1 bg-[#111827] font-['Liberation_Sans',Arial,sans-serif]">
          <AppSidebar />
          <Dashboard />
          <PageScrollbar />
        </div>
        <EdgeSidebar />
      </div>
      <Taskbar />
    </div>
  );
}
